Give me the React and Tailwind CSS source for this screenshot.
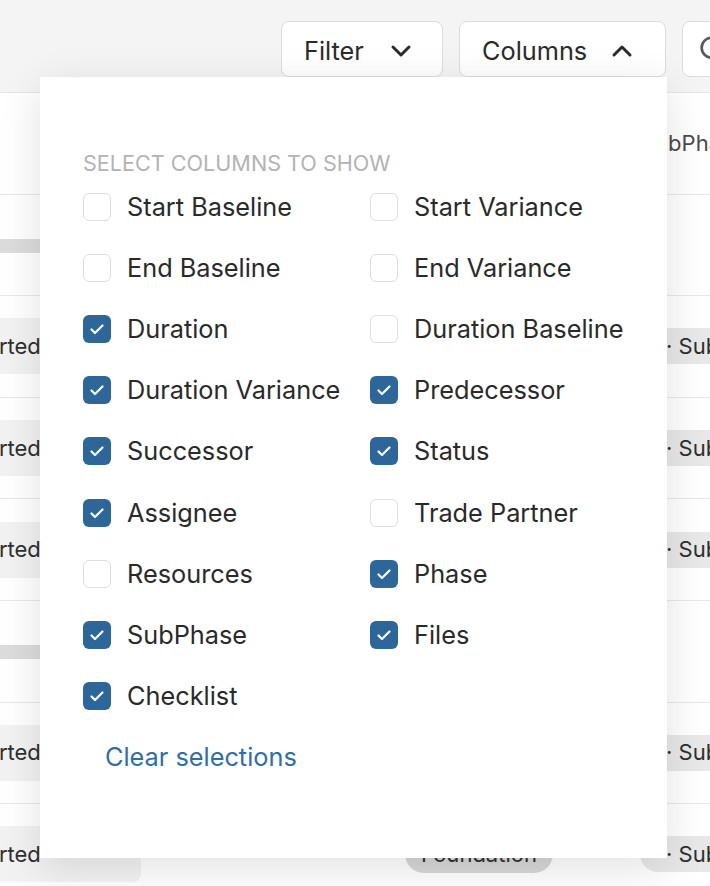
import React from "react";

const COLS_LEFT = [
  ["Start Baseline", false],
  ["End Baseline", false],
  ["Duration", true],
  ["Duration Variance", true],
  ["Successor", true],
  ["Assignee", true],
  ["Resources", false],
  ["SubPhase", true],
  ["Checklist", true],
];

const COLS_RIGHT = [
  ["Start Variance", false],
  ["End Variance", false],
  ["Duration Baseline", false],
  ["Predecessor", true],
  ["Status", true],
  ["Trade Partner", false],
  ["Phase", true],
  ["Files", true],
];

// row kinds for the table underneath the menu
const ROWS = ["group", "task", "task", "task", "group", "task", "task"];

function Chevron({ up }) {
  return (
    <svg width="22" height="14" viewBox="0 0 22 14" fill="none">
      <path
        d={up ? "M3 11 L11 3 L19 11" : "M3 3 L11 11 L19 3"}
        stroke="#2b2b2b"
        strokeWidth="3"
        strokeLinecap="round"
        strokeLinejoin="round"
      />
    </svg>
  );
}

function Box({ checked }) {
  if (checked) {
    return (
      <span className="flex h-[28px] w-[28px] shrink-0 items-center justify-center rounded-[6px] bg-[#2d6699]">
        <svg width="18" height="18" viewBox="0 0 18 18" fill="none">
          <path
            d="M3.5 9.5 L7 13 L14.5 5.5"
            stroke="#fff"
            strokeWidth="2.2"
            strokeLinecap="round"
            strokeLinejoin="round"
          />
        </svg>
      </span>
    );
  }
  return <span className="h-[28px] w-[28px] shrink-0 rounded-[6px] border border-[#dedede] bg-white" />;
}

function Option({ label, checked }) {
  return (
    <label className="flex h-[61.2px] items-center gap-[16px]">
      <Box checked={checked} />
      <span className="text-[25.3px] text-[#2a2a2a] whitespace-nowrap">{label}</span>
    </label>
  );
}

function TaskRow({ kind }) {
  return (
    <div className="flex h-[101.6px] shrink-0 items-center border-b border-[#e8e8e8] bg-white">
      {kind === "group" ? (
        <div className="ml-[-20px] mt-[2px] h-[14px] w-[320px] rounded-full bg-[#dcdcdc]" />
      ) : (
        <>
          <div className="ml-[-94px] flex h-[56px] w-[235px] shrink-0 items-center justify-between rounded-[8px] bg-[#f3f2f3] pl-[16px] pr-[26px]">
            <span className="text-[22px] text-[#2f2f2f] whitespace-nowrap">Not Started</span>
            <svg width="12" height="8" viewBox="0 0 12 8" fill="none">
              <path d="M1.5 1.5 L6 6 L10.5 1.5" stroke="#555" strokeWidth="2" strokeLinecap="round" />
            </svg>
          </div>
          <div className="ml-[264px] flex h-[38px] w-[148px] shrink-0 items-center justify-center rounded-full bg-[#d8d8d8]">
            <span className="text-[22px] text-[#2f2f2f]">Foundation</span>
          </div>
          <div className="ml-[87px] flex h-[36px] shrink-0 items-center rounded-l-full bg-[#e8e8e8] pl-[26px] pr-[20px]">
            <span className="text-[22px] text-[#2f2f2f] whitespace-nowrap">· Subphase</span>
          </div>
        </>
      )}
    </div>
  );
}

export default function App() {
  return (
    <div
      className="relative h-[886px] w-[710px] overflow-hidden bg-white"
      style={{ fontFamily: "Inter, 'Noto Sans', sans-serif" }}
    >
      {/* toolbar */}
      <div className="flex h-[93px] items-start gap-[16px] border-b border-[#e6e6e6] bg-[#f5f4f5] pl-[281px] pt-[21px]">
        <button className="flex h-[56px] w-[162px] shrink-0 items-center gap-[26px] rounded-[8px] border border-[#dcdcdc] bg-white pl-[22px] pt-[3px]">
          <span className="text-[25.3px] text-[#2b2b2b]">Filter</span>
          <Chevron />
        </button>
        <button className="flex h-[56px] w-[207px] shrink-0 items-center gap-[24px] rounded-[8px] border border-[#dcdcdc] bg-white pl-[22px] pt-[3px]">
          <span className="text-[25.3px] text-[#2b2b2b]">Columns</span>
          <Chevron up />
        </button>
        <button className="flex h-[56px] w-[80px] shrink-0 items-center rounded-[8px] border border-[#dcdcdc] bg-white pl-[14px]">
          <svg width="32" height="32" viewBox="0 0 24 24" fill="none" stroke="#5a5a5a" strokeWidth="2" strokeLinecap="round">
            <circle cx="11" cy="11" r="7.5" />
            <path d="M16.5 16.5 L21 21" />
          </svg>
        </button>
      </div>

      {/* table */}
      <div className="flex flex-col">
        <div className="flex h-[101.6px] shrink-0 items-center border-b border-[#e8e8e8] bg-white pl-[641px]">
          <span className="text-[22px] text-[#4a4a4a] whitespace-nowrap">SubPhase</span>
        </div>
        {ROWS.map((k, i) => (
          <TaskRow key={i} kind={k} />
        ))}
      </div>

      {/* column picker menu */}
      <div className="absolute left-[40px] top-[77px] h-[781px] w-[627px] bg-white pl-[43px] pt-[74px] shadow-[0_10px_40px_rgba(0,0,0,0.12)]">
        <div className="text-[21.6px] uppercase leading-[24px] text-[#b3b3b3]">Select columns to show</div>
        <div className="mt-[1px] grid grid-cols-[287px_1fr]">
          <div className="flex flex-col">
            {COLS_LEFT.map(([l, c]) => (
              <Option key={l} label={l} checked={c} />
            ))}
            <div className="flex h-[61.2px] items-center pl-[22px]">
              <span className="text-[25.3px] text-[#2f6ea6]">Clear selections</span>
            </div>
          </div>
          <div className="flex flex-col">
            {COLS_RIGHT.map(([l, c]) => (
              <Option key={l} label={l} checked={c} />
            ))}
          </div>
        </div>
      </div>
    </div>
  );
}
